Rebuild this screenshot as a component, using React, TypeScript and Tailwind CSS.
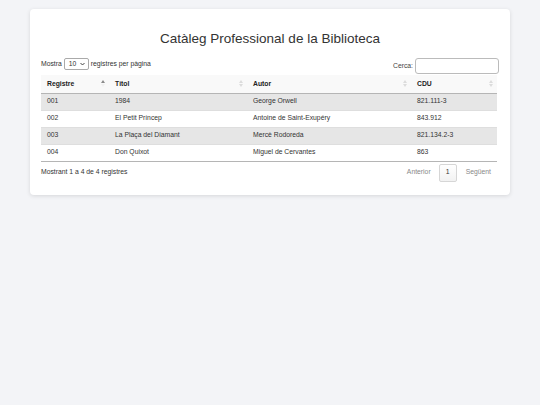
import React from "react";

const rows = [
  ["001", "1984", "George Orwell", "821.111-3"],
  ["002", "El Petit Príncep", "Antoine de Saint-Exupéry", "843.912"],
  ["003", "La Plaça del Diamant", "Mercè Rodoreda", "821.134.2-3"],
  ["004", "Don Quixot", "Miguel de Cervantes", "863"],
];

function SortIcon({ active }: { active?: boolean }) {
  return (
    <svg width="4" height="7" viewBox="0 0 4 7" className="shrink-0">
      <polygon points="2,0 4,3 0,3" fill={active ? "#8a8a8a" : "#dcdcdc"} />
      <polygon points="0,4 4,4 2,7" fill={active ? "#f0f0f0" : "#dcdcdc"} />
    </svg>
  );
}

export default function App() {
  const headers = ["Registre", "Títol", "Autor", "CDU"];
  return (
    <div
      className="min-h-[405px] w-[540px] bg-[#f3f4f7] pt-[9px] text-[#333]"
      style={{ fontFamily: '"Liberation Sans", Arial, sans-serif' }}
    >
      <div className="mx-[30px] rounded-[4px] bg-white px-[11px] pb-[13px] pt-[21px] shadow-[0_1px_4px_rgba(0,0,0,0.12)]">
        <h1 className="text-center text-[13.5px] leading-[18px] text-[#333]">
          Catàleg Professional de la Biblioteca
        </h1>
        <div className="mt-[10px] flex h-[16px] items-center justify-between text-[6.8px]">
          <div className="flex items-center gap-[2px] -mt-[4px]">
            <span>Mostra</span>
            <div className="flex h-[12px] w-[25px] items-center justify-between rounded-[2px] border border-[#aaa] px-[3px]">
              <span className="pl-[1px]">10</span>
              <svg width="5" height="4" viewBox="0 0 5 4">
                <polyline points="0.5,1 2.5,3 4.5,1" fill="none" stroke="#333" strokeWidth="0.9" />
              </svg>
            </div>
            <span>registres per pàgina</span>
          </div>
          <div className="flex items-center gap-[2px]">
            <span className="text-[#444]">Cerca:</span>
            <div className="h-[16px] w-[84px] rounded-[3px] border border-[#bbb] bg-white" />
          </div>
        </div>
        <table className="mt-[1px] w-[456px] table-fixed border-collapse text-[6.8px]">
          <colgroup>
            <col className="w-[68px]" />
            <col className="w-[138px]" />
            <col className="w-[164px]" />
            <col className="w-[86px]" />
          </colgroup>
          <thead>
            <tr className="h-[18px] border-b border-[#b5b5b5] bg-[#f9f9f9]">
              {headers.map((h, i) => (
                <th key={h} className="pl-[6px] pr-[4px] text-left font-bold text-[#222]">
                  <div className="flex items-center justify-between">
                    <span>{h}</span>
                    <SortIcon active={i === 0} />
                  </div>
                </th>
              ))}
            </tr>
          </thead>
          <tbody>
            {rows.map((r, i) => (
              <tr
                key={r[0]}
                className={
                  "h-[17px] border-b " +
                  (i === rows.length - 1 ? "border-[#b5b5b5] " : "border-[#dedede] ") +
                  (i % 2 === 0 ? "bg-[#e6e6e6]" : "bg-white")
                }
              >
                {r.map((c, j) => (
                  <td key={j} className="px-[6px] text-[#333]">
                    {c}
                  </td>
                ))}
              </tr>
            ))}
          </tbody>
        </table>
        <div className="mt-[2px] flex h-[18px] items-center justify-between text-[6.8px]">
          <span>Mostrant 1 a 4 de 4 registres</span>
          <div className="flex items-center pr-[8px]">
            <span className="text-[#888]">Anterior</span>
            <div className="ml-[8px] mr-[9px] flex h-[18px] w-[18px] items-center justify-center rounded-[2px] border border-[#d6d6d6] bg-gradient-to-b from-white to-[#f2f2f2] text-[#333]">
              1
            </div>
            <span className="text-[#888]">Següent</span>
          </div>
        </div>
      </div>
    </div>
  );
}
